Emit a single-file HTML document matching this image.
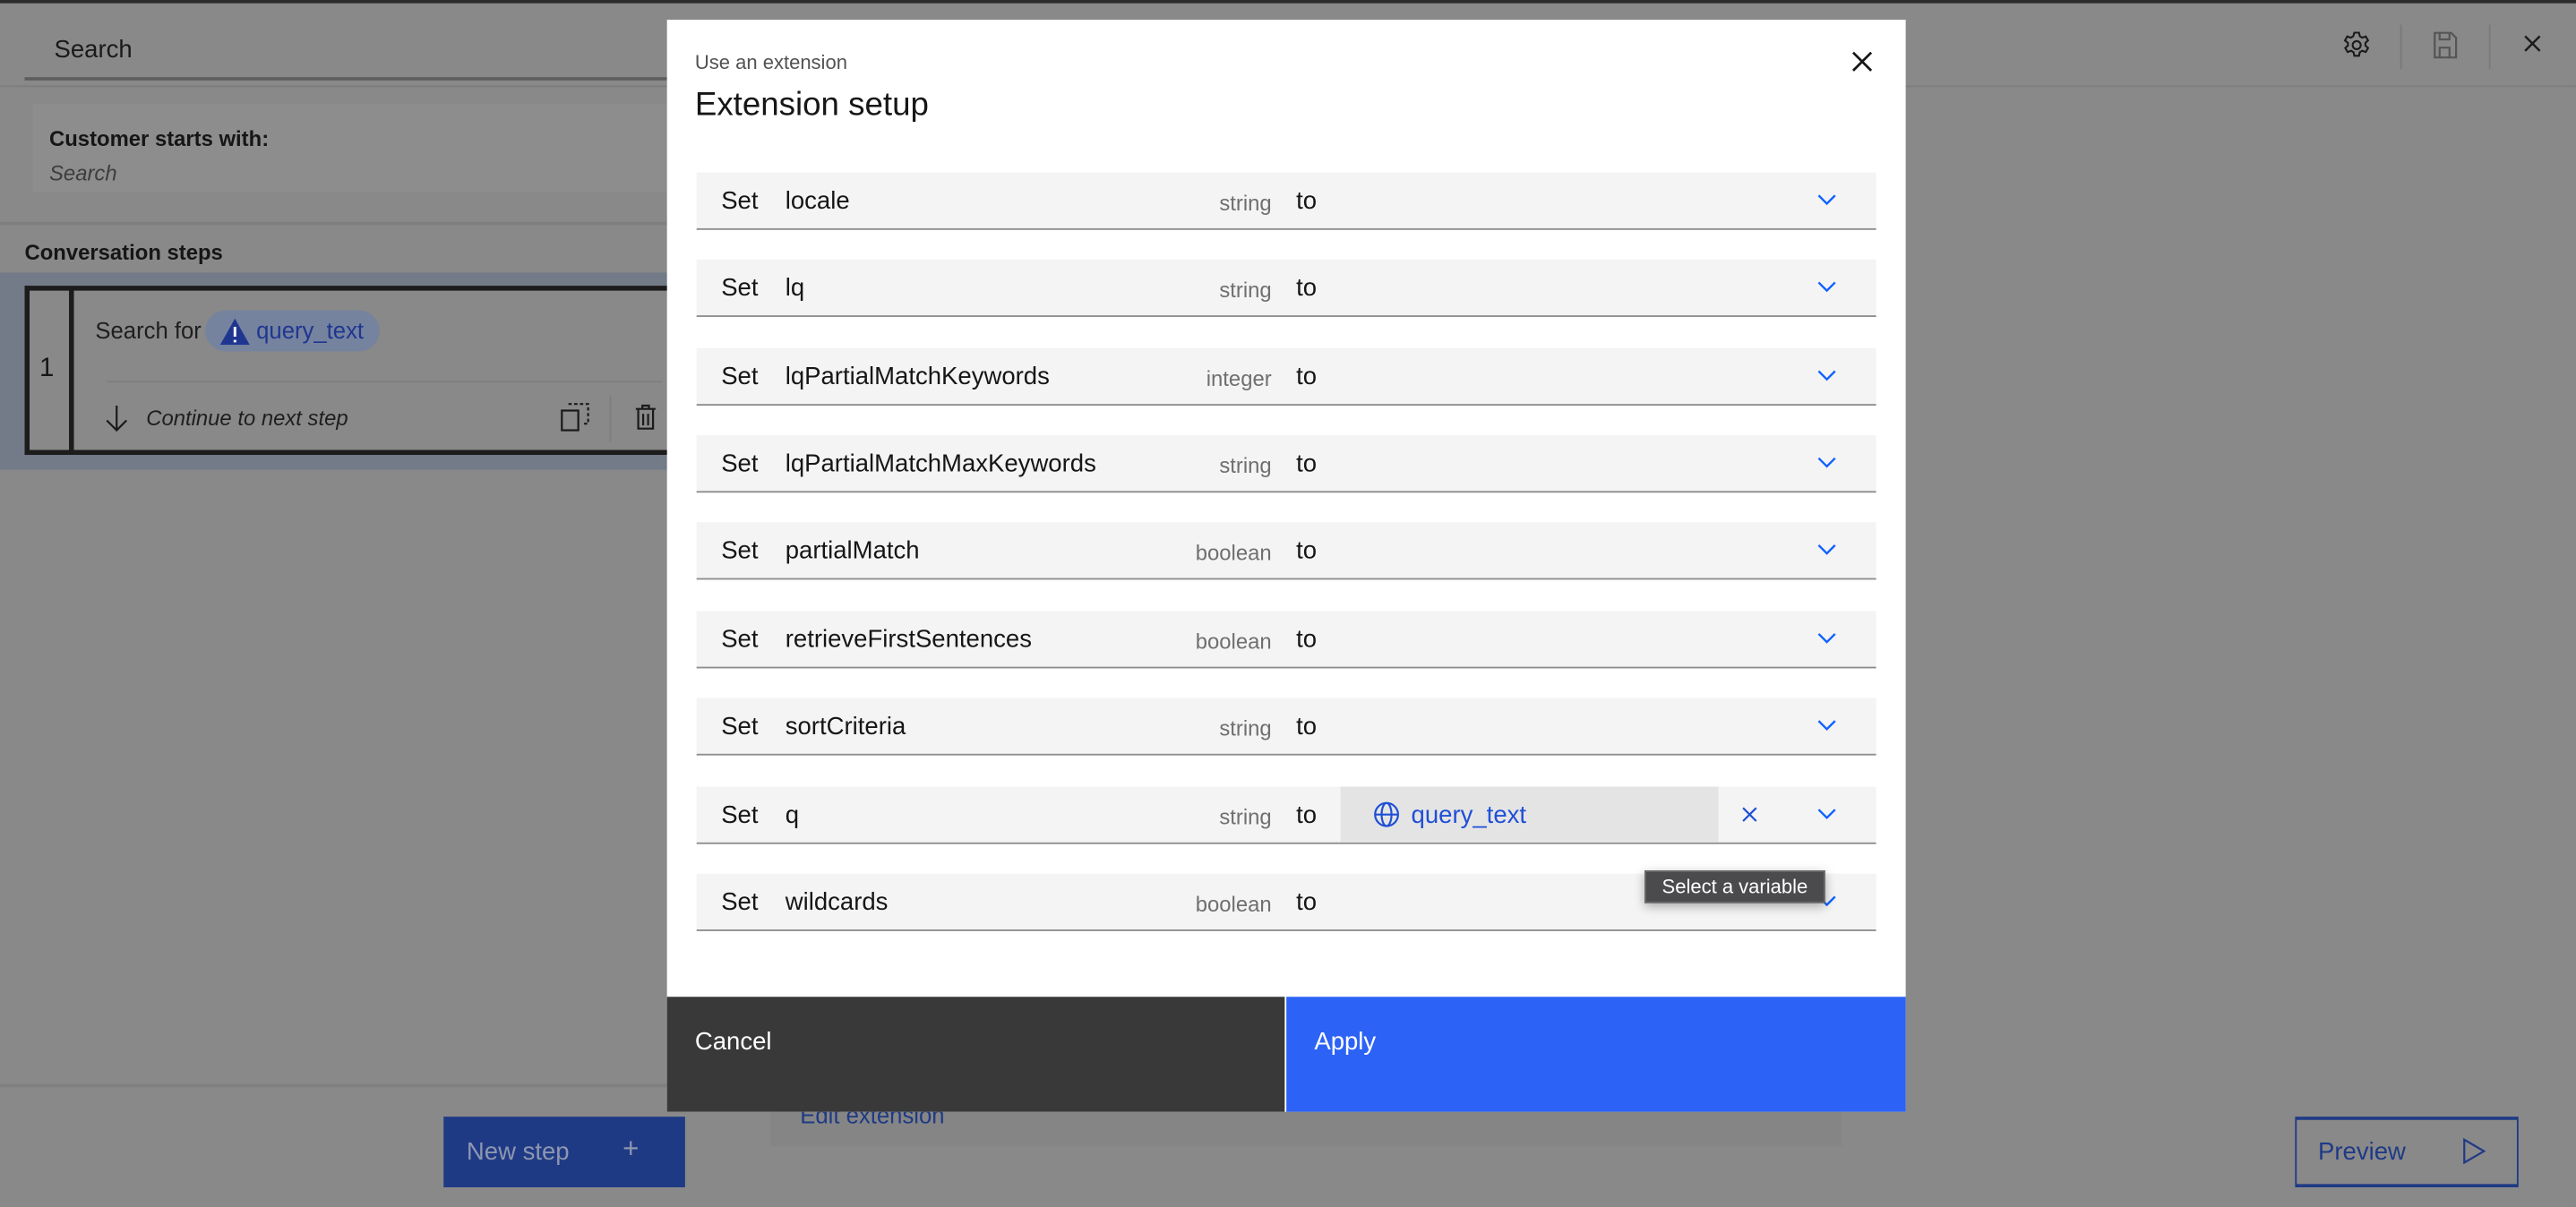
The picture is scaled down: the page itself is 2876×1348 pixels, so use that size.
<!DOCTYPE html>
<html><head><meta charset="utf-8"><style>
*{margin:0;padding:0;box-sizing:border-box}
html,body{width:2876px;height:1348px;overflow:hidden;background:#898989}
#w{position:absolute;left:0;top:0;width:1568px;height:735px;transform:scale(1.83418,1.83401);transform-origin:0 0;font-family:"Liberation Sans",sans-serif;background:#898989;color:#161616}
.a{position:absolute}
.row{position:absolute;left:424px;width:718px;height:35px;background:#f4f4f4;border-bottom:1px solid #8d8d8d;font-size:15px}
.row span{position:absolute;top:9px}
.row .t{font-size:13px;color:#6f6f6f;right:368px;top:11px}
.row .s{left:15px}.row .n{left:54px}.row .to{left:365px}
.chev{position:absolute;left:682px;top:13px}
</style></head><body><div id="w">
<div class="a" style="left:0;top:0;width:1568px;height:2px;background:#2b2b2b"></div>
<div class="a" style="left:33px;top:22px;font-size:15px;color:#1a1a1a">Search</div>
<div class="a" style="left:15px;top:47px;width:391px;height:2px;background:#5e5e5e"></div>
<div class="a" style="left:0;top:52px;width:1568px;height:1px;background:#7d7d7d"></div>
<div class="a" style="left:1461px;top:15px;width:1px;height:27px;background:#7a7a7a"></div>
<div class="a" style="left:1515px;top:15px;width:1px;height:27px;background:#7a7a7a"></div>
<svg class="a" style="left:1425px;top:18px" width="19" height="19" viewBox="0 0 20 20" fill="none" stroke="#1a1a1a" stroke-width="1.2"><path d="M8.5 2h3l.5 2.3 1.6.9 2.2-.8 1.5 2.6-1.7 1.5v1.8l1.7 1.5-1.5 2.6-2.2-.8-1.6.9-.5 2.3h-3l-.5-2.3-1.6-.9-2.2.8-1.5-2.6 1.7-1.5V8.5L2.5 7l1.5-2.6 2.2.8 1.6-.9z"/><circle cx="10" cy="10" r="2.6"/></svg>
<svg class="a" style="left:1481px;top:19px" width="15" height="17" viewBox="0 0 15 17" fill="none" stroke="#555" stroke-width="1.2"><path d="M1 1h10l3 3v12H1z M4 1v4h6V1 M4 16v-6h6v6"/></svg>
<svg class="a" style="left:1536px;top:21px" width="11" height="11" viewBox="0 0 11 11" stroke="#1a1a1a" stroke-width="1.3"><path d="M1 1l9 9M10 1l-9 9"/></svg>
<div class="a" style="left:20px;top:63px;width:386px;height:54px;background:#8d8d8d"></div>
<div class="a" style="left:30px;top:77px;font-size:13px;font-weight:bold">Customer starts with:</div>
<div class="a" style="left:30px;top:98px;font-size:13px;font-style:italic;color:#3d3d3d">Search</div>
<div class="a" style="left:0;top:135px;width:406px;height:2px;background:#7f7f7f"></div>
<div class="a" style="left:15px;top:146px;font-size:13px;font-weight:bold">Conversation steps</div>
<div class="a" style="left:0;top:166px;width:406px;height:120px;background:#737a88"></div>
<div class="a" style="left:15px;top:174px;width:400px;height:103px;border:3px solid #1c1c1c;border-right:none;background:#898989"></div>
<div class="a" style="left:42px;top:176px;width:3px;height:99px;background:#1c1c1c"></div>
<div class="a" style="left:24px;top:216px;font-size:16px">1</div>
<div class="a" style="left:58px;top:193px;font-size:14px;color:#1e1e1e">Search for</div>
<div class="a" style="left:125px;top:189px;width:106px;height:25px;border-radius:13px;background:#75839f"></div>
<svg class="a" style="left:134px;top:194px" width="18" height="16" viewBox="0 0 18 16"><path d="M9 0L18 16H0z" fill="#1f3691"/><path d="M9 5v6M9 13v1.5" stroke="#fff" stroke-width="1.6"/></svg>
<div class="a" style="left:156px;top:193px;font-size:14px;color:#1f3691">query_text</div>
<div class="a" style="left:65px;top:232px;width:338px;height:1px;background:#7e7e7e"></div>
<svg class="a" style="left:64px;top:246px" width="14" height="17" viewBox="0 0 14 17" fill="none" stroke="#1a1a1a" stroke-width="1.2"><path d="M7 1v15M1 10l6 6 6-6"/></svg>
<div class="a" style="left:89px;top:247px;font-size:13px;font-style:italic;color:#1e1e1e">Continue to next step</div>
<svg class="a" style="left:341px;top:245px" width="18" height="18" viewBox="0 0 18 18" fill="none" stroke="#1a1a1a" stroke-width="1.2"><rect x="1" y="5" width="10" height="12"/><path d="M5 1h12v12h-3" stroke-dasharray="2 1.5"/></svg>
<div class="a" style="left:371px;top:241px;width:1px;height:28px;background:#7e7e7e"></div>
<svg class="a" style="left:386px;top:246px" width="14" height="16" viewBox="0 0 14 16" fill="none" stroke="#1a1a1a" stroke-width="1.2"><path d="M1 3h12M5 3V1h4v2M2.5 3v12h9V3M5.5 6v7M8.5 6v7"/></svg>
<div class="a" style="left:0;top:660px;width:406px;height:2px;background:#7f7f7f"></div>
<div class="a" style="left:270px;top:680px;width:147px;height:43px;background:#1f3a85"></div>
<div class="a" style="left:284px;top:693px;font-size:15px;color:#8e96b0">New step</div>
<div class="a" style="left:379px;top:690px;font-size:17px;color:#8e96b0">+</div>
<div class="a" style="left:469px;top:655px;width:652px;height:43px;background:#858585"></div>
<div class="a" style="left:487px;top:671px;font-size:14px;color:#1f3a85">Edit extension</div>
<div class="a" style="left:1397px;top:680px;width:136px;height:43px;border:1px solid #1f3a85;border-top-width:2px;border-bottom-width:2px"></div>
<div class="a" style="left:1411px;top:693px;font-size:15px;color:#1f3a85">Preview</div>
<svg class="a" style="left:1499px;top:693px" width="14" height="16" viewBox="0 0 14 16" fill="none" stroke="#1f3a85" stroke-width="1.2"><path d="M1 1l12 7-12 7z"/></svg>

<div class="a" style="left:406px;top:12px;width:754px;height:665px;background:#fff"></div>
<div class="a" style="left:423px;top:31px;font-size:12px;color:#525252">Use an extension</div>
<div class="a" style="left:423px;top:53px;font-size:20px;color:#161616">Extension setup</div>
<svg class="a" style="left:1127px;top:31px" width="13" height="13" viewBox="0 0 13 13" stroke="#161616" stroke-width="1.5"><path d="M1 1l11 11M12 1L1 12"/></svg>

<div class="row" style="top:105px"><span class="s">Set</span><span class="n">locale</span><span class="t">string</span><span class="to">to</span><svg class="chev" width="12" height="8" viewBox="0 0 12 8" fill="none" stroke="#0f62fe" stroke-width="1.3"><path d="M1 1l5 5 5-5"/></svg></div>
<div class="row" style="top:158px"><span class="s">Set</span><span class="n">lq</span><span class="t">string</span><span class="to">to</span><svg class="chev" width="12" height="8" viewBox="0 0 12 8" fill="none" stroke="#0f62fe" stroke-width="1.3"><path d="M1 1l5 5 5-5"/></svg></div>
<div class="row" style="top:212px"><span class="s">Set</span><span class="n">lqPartialMatchKeywords</span><span class="t">integer</span><span class="to">to</span><svg class="chev" width="12" height="8" viewBox="0 0 12 8" fill="none" stroke="#0f62fe" stroke-width="1.3"><path d="M1 1l5 5 5-5"/></svg></div>
<div class="row" style="top:265px"><span class="s">Set</span><span class="n">lqPartialMatchMaxKeywords</span><span class="t">string</span><span class="to">to</span><svg class="chev" width="12" height="8" viewBox="0 0 12 8" fill="none" stroke="#0f62fe" stroke-width="1.3"><path d="M1 1l5 5 5-5"/></svg></div>
<div class="row" style="top:318px"><span class="s">Set</span><span class="n">partialMatch</span><span class="t">boolean</span><span class="to">to</span><svg class="chev" width="12" height="8" viewBox="0 0 12 8" fill="none" stroke="#0f62fe" stroke-width="1.3"><path d="M1 1l5 5 5-5"/></svg></div>
<div class="row" style="top:372px"><span class="s">Set</span><span class="n">retrieveFirstSentences</span><span class="t">boolean</span><span class="to">to</span><svg class="chev" width="12" height="8" viewBox="0 0 12 8" fill="none" stroke="#0f62fe" stroke-width="1.3"><path d="M1 1l5 5 5-5"/></svg></div>
<div class="row" style="top:425px"><span class="s">Set</span><span class="n">sortCriteria</span><span class="t">string</span><span class="to">to</span><svg class="chev" width="12" height="8" viewBox="0 0 12 8" fill="none" stroke="#0f62fe" stroke-width="1.3"><path d="M1 1l5 5 5-5"/></svg></div>
<div class="row" style="top:479px"><span class="s">Set</span><span class="n">q</span><span class="t">string</span><span class="to">to</span>
<div style="position:absolute;left:392px;top:0;width:230px;height:34px;background:#e4e4e4"></div>
<svg style="position:absolute;left:412px;top:9px" width="16" height="16" viewBox="0 0 16 16" fill="none" stroke="#1f4fd6" stroke-width="1.2"><circle cx="8" cy="8" r="7"/><ellipse cx="8" cy="8" rx="3" ry="7"/><path d="M1 8h14"/></svg>
<span style="left:435px;color:#1f4fd6">query_text</span>
<svg style="position:absolute;left:636px;top:12px" width="10" height="10" viewBox="0 0 10 10" stroke="#1f4fd6" stroke-width="1.2"><path d="M1 1l8 8M9 1L1 9"/></svg>
<svg class="chev" width="12" height="8" viewBox="0 0 12 8" fill="none" stroke="#0f62fe" stroke-width="1.3"><path d="M1 1l5 5 5-5"/></svg></div>
<div class="row" style="top:532px"><span class="s">Set</span><span class="n">wildcards</span><span class="t">boolean</span><span class="to">to</span><svg class="chev" width="12" height="8" viewBox="0 0 12 8" fill="none" stroke="#0f62fe" stroke-width="1.3"><path d="M1 1l5 5 5-5"/></svg></div>
<div class="a" style="left:1001px;top:530px;width:110px;height:20px;background:#4b4a4d;border:1px solid #6a6a6a;box-shadow:0 2px 6px rgba(0,0,0,.3);color:#fff;font-size:12px;line-height:18px;text-align:center">Select a variable</div>

<div class="a" style="left:406px;top:607px;width:376px;height:70px;background:#393939"></div>
<div class="a" style="left:423px;top:626px;font-size:15px;color:#fff">Cancel</div>
<div class="a" style="left:783px;top:607px;width:377px;height:70px;background:#2c63f6"></div>
<div class="a" style="left:800px;top:626px;font-size:15px;color:#fff">Apply</div>
</div></body></html>
